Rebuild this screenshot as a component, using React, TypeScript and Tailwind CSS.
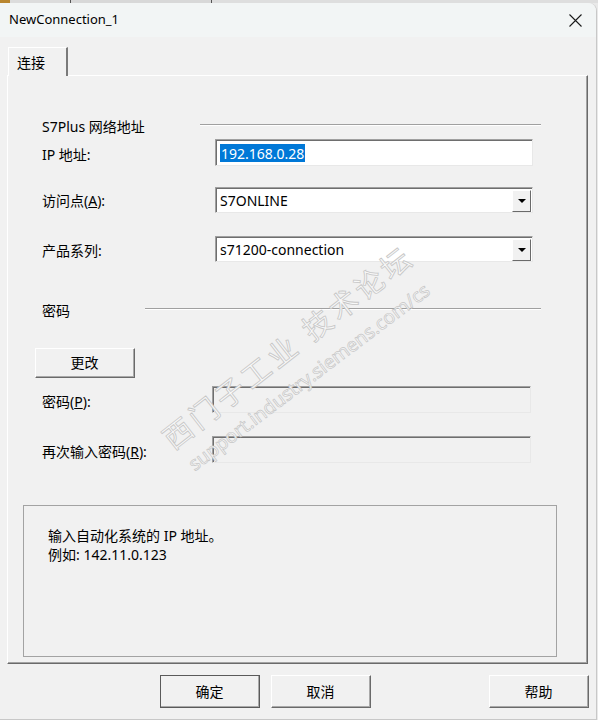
import React from 'react';

// Windows-style "NewConnection_1" dialog

const Raised: React.FC<{ className?: string; def?: boolean; children: React.ReactNode }> = ({ className = '', def, children }) => (
    <div className={`${className} ${def ? 'border border-[#5a5a5a]' : 'border border-white border-r-[#6a6a6a] border-b-[#6a6a6a]'} bg-[#f1f1f1]`}>
        <div className="h-full w-full border-r border-b border-[#a9a9a9] flex items-center justify-center text-[14px] text-black">
            {children}
        </div>
    </div>
);

const Sunken: React.FC<{ className?: string; disabled?: boolean; children?: React.ReactNode }> = ({ className = '', disabled, children }) => (
    <div className={`${className} border border-[#a0a0a0] border-r-[#e8e8e8] border-b-[#e8e8e8]`}>
        <div
            className={`h-full w-full flex items-center border-t border-l ${disabled ? 'border-[#6e6e6e] bg-[#f1f1f1]' : 'border-[#6e6e6e] bg-white'}`}
        >
            {children}
        </div>
    </div>
);

const Combo: React.FC<{ value: string }> = ({ value }) => (
    <Sunken className="w-[318px] h-[26px]">
        <span className="flex-1 pl-[3px] text-[14px] text-black leading-none">{value}</span>
        <div className="w-[19px] h-[22px] mr-[1px] border border-white border-r-[#6a6a6a] border-b-[#6a6a6a] bg-[#f1f1f1] flex items-center justify-center">
            <svg width="8" height="4" viewBox="0 0 8 4">
                <path d="M0 0 L8 0 L4 4 Z" fill="#000" />
            </svg>
        </div>
    </Sunken>
);

const GroupHeader: React.FC<{ label: string; labelWidth: string; lineWidth: string; className?: string }> = ({ label, labelWidth, lineWidth, className = '' }) => (
    <div className={`flex items-center h-[16px] pl-[34px] ${className}`}>
        <span className={`${labelWidth} text-[14px] text-black`}>{label}</span>
        <div className={`${lineWidth} -mt-[3px] border-t border-[#a0a0a0] border-b border-b-white`} />
    </div>
);

const App: React.FC = () => {
    return (
        <div className="relative w-[598px] h-[720px] overflow-hidden bg-[#e9e9e9] font-['Noto_Sans','Noto_Sans_CJK_SC',sans-serif]">
            {/* bit of the window behind */}
            <div className="h-[3px] flex">
                <div className="w-[10px] bg-[#b9862f]" />
                <div className="w-[60px] bg-[#dcdcdc]" />
                <div className="w-[1px] bg-[#555]" />
                <div className="w-[140px] bg-[#d8d8d8]" />
                <div className="w-[1px] bg-[#555]" />
                <div className="flex-1 bg-[#dedede]" />
            </div>

            <div className="h-[717px] w-[597px] bg-[#f1f1f1] rounded-tr-[8px] border-r border-b border-[#c8c8c8] flex flex-col">
                {/* title bar */}
                <div className="h-[34px] flex items-center justify-between pl-[9px] pr-[14px] bg-[#f2f5f5] rounded-tr-[8px]">
                    <span className="text-[13px] text-black">NewConnection_1</span>
                    <svg width="13" height="13" viewBox="0 0 13 13">
                        <path d="M0.5 0.5 L12.5 12.5 M12.5 0.5 L0.5 12.5" stroke="#1a1a1a" strokeWidth="1.1" />
                    </svg>
                </div>

                {/* tab */}
                <div className="mt-[10px] pl-[8px] h-[28px] flex">
                    <div className="w-[60px] h-[29px] border-t border-l border-white border-r-2 border-r-[#7a7a7a] bg-[#f1f1f1] pl-[8px] pt-[4px] text-[14px] text-black z-10">
                        连接
                    </div>
                </div>

                {/* tab panel */}
                <div className="ml-[7px] w-[581px] h-[589px] border-t border-l border-white border-r border-b border-r-[#6a6a6a] border-b-[#6a6a6a]">
                    <div className="h-full w-full border-r border-b border-[#a3a3a3] flex flex-col">
                        <GroupHeader className="mt-[42px]" label="S7Plus 网络地址" labelWidth="w-[158px]" lineWidth="w-[341px]" />

                        <div className="flex items-center mt-[5px] pl-[34px] text-[14px] text-black">
                            <span className="w-[173px] pt-[3px]">IP 地址:</span>
                            <Sunken className="w-[318px] h-[27px]">
                                <span className="ml-[3px] px-[1px] h-[18px] flex items-center bg-[#0078d7] text-white text-[14px]">192.168.0.28</span>
                            </Sunken>
                        </div>

                        <div className="flex items-center mt-[21px] pl-[34px] text-[14px] text-black">
                            <span className="w-[173px]">
                                访问点(<span className="underline">A</span>):
                            </span>
                            <Combo value="S7ONLINE" />
                        </div>

                        <div className="flex items-center mt-[23px] pl-[34px] text-[14px] text-black">
                            <span className="w-[173px] pt-[2px]">产品系列:</span>
                            <Combo value="s71200-connection" />
                        </div>

                        <GroupHeader className="mt-[40px]" label="密码" labelWidth="w-[103px]" lineWidth="w-[396px]" />

                        <Raised className="ml-[27px] mt-[30px] w-[100px] h-[30px]">更改</Raised>

                        <div className="flex items-center mt-[8px] pl-[34px] text-[14px] text-black">
                            <span className="w-[170px] pt-[3px]">
                                密码(<span className="underline">P</span>):
                            </span>
                            <Sunken disabled className="w-[319px] h-[27px]" />
                        </div>

                        <div className="flex items-center mt-[23px] pl-[34px] text-[14px] text-black">
                            <span className="w-[170px] pt-[3px]">
                                再次输入密码(<span className="underline">R</span>):
                            </span>
                            <Sunken disabled className="w-[319px] h-[27px]" />
                        </div>

                        <div className="ml-[15px] mt-[42px] w-[534px] h-[152px] border border-[#a3a3a3] pl-[24px] pt-[20px] text-[14px] text-black leading-[19px]">
                            <div>输入自动化系统的 IP 地址。</div>
                            <div>例如: 142.11.0.123</div>
                        </div>
                    </div>
                </div>

                {/* bottom buttons */}
                <div className="mt-[11px] pl-[160px] flex">
                    <Raised def className="w-[100px] h-[33px]">确定</Raised>
                    <Raised className="ml-[11px] w-[100px] h-[33px]">取消</Raised>
                    <Raised className="ml-[118px] w-[100px] h-[33px]">帮助</Raised>
                </div>
            </div>

            {/* forum watermark */}
            <div className="absolute left-[288px] top-[347px] -translate-x-1/2 -translate-y-1/2 rotate-[-38deg] whitespace-nowrap text-[29px] tracking-[4px] text-[#f8f8f8] [-webkit-text-stroke:0.8px_#c6c6c6] pointer-events-none">
                西门子工业 技术论坛
            </div>
            <div className="absolute left-[309px] top-[377px] -translate-x-1/2 -translate-y-1/2 rotate-[-37deg] whitespace-nowrap text-[19px] text-[#f8f8f8] [-webkit-text-stroke:0.7px_#c6c6c6] pointer-events-none">
                support.industry.siemens.com/cs
            </div>
        </div>
    );
};

export default App;
